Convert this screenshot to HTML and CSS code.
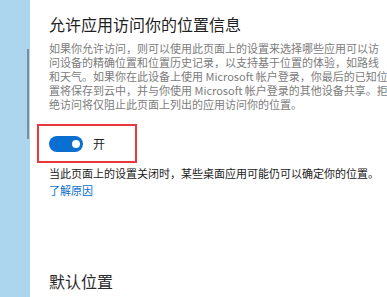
FILE: index.html
```html
<!DOCTYPE html>
<html lang="zh-CN">
<head>
<meta charset="utf-8">
<title>位置</title>
<link rel="stylesheet" href="styles.css">
</head>
<body>
<div class="page">
  <aside class="side">
    <div class="thumb"></div>
  </aside>
  <main class="main">
    <h2 class="title">允许应用访问你的位置信息</h2>
    <p class="desc">如果你允许访问，则可以使用此页面上的设置来选择哪些应用可以访<br>问设备的精确位置和位置历史记录，以支持基于位置的体验，如路线<br>和天气。如果你在此设备上使用 Microsoft 帐户登录，你最后的已知位<br>置将保存到云中，并与你使用 Microsoft 帐户登录的其他设备共享。拒<br>绝访问将仅阻止此页面上列出的应用访问你的位置。</p>
    <div class="mark">
      <div class="toggle"><span class="knob"></span></div>
      <span class="state">开</span>
    </div>
    <p class="note">当此页面上的设置关闭时，某些桌面应用可能仍可以确定你的位置。</p>
    <a class="link" href="#">了解原因</a>
    <h2 class="title2">默认位置</h2>
  </main>
</div>
</body>
</html>
```
FILE: styles.css
```css
html, body {
  margin: 0;
  padding: 0;
  background: #ffffff;
}
body {
  font-family: "Microsoft YaHei", "Noto Sans CJK SC", "Noto Sans", sans-serif;
  width: 387px;
  height: 297px;
  overflow: hidden;
}
.page {
  display: flex;
  height: 297px;
}
.side {
  width: 30px;
  flex: none;
  background: #abd6ee;
  display: flex;
  justify-content: flex-end;
  padding-top: 49px;
  box-sizing: border-box;
}
.thumb {
  width: 2px;
  height: 90px;
  margin-right: 1px;
  background: #7d8d98;
}
.main {
  padding: 14px 0 0 19px;
  display: flex;
  flex-direction: column;
  align-items: flex-start;
}
.title {
  margin: 0;
  font-size: 16px;
  line-height: 20px;
  font-weight: 400;
  color: #1f1f1f;
}
.desc {
  margin: 7px 0 0;
  font-size: 11px;
  line-height: 14px;
  color: #7c7c7c;
  white-space: nowrap;
}
.mark {
  margin: 13px 0 0 -12px;
  width: 100px;
  height: 39px;
  box-sizing: border-box;
  border: 2px solid #e8383d;
  display: flex;
  align-items: center;
  padding-left: 10px;
  gap: 10px;
}
.toggle {
  width: 34px;
  height: 16px;
  border-radius: 8px;
  background: #0a6fd0;
  position: relative;
}
.knob {
  position: absolute;
  right: 3px;
  top: 4px;
  width: 8px;
  height: 8px;
  border-radius: 50%;
  background: #ffffff;
}
.state {
  font-size: 12px;
  color: #222;
}
.note {
  margin: 2px 0 0;
  font-size: 11px;
  line-height: 17px;
  color: #222;
  white-space: nowrap;
}
.link {
  font-size: 11px;
  line-height: 17px;
  color: #0a6fd0;
  text-decoration: none;
}
.title2 {
  margin: 72px 0 0;
  font-size: 16px;
  line-height: 20px;
  font-weight: 400;
  color: #2a2a2a;
}
```
